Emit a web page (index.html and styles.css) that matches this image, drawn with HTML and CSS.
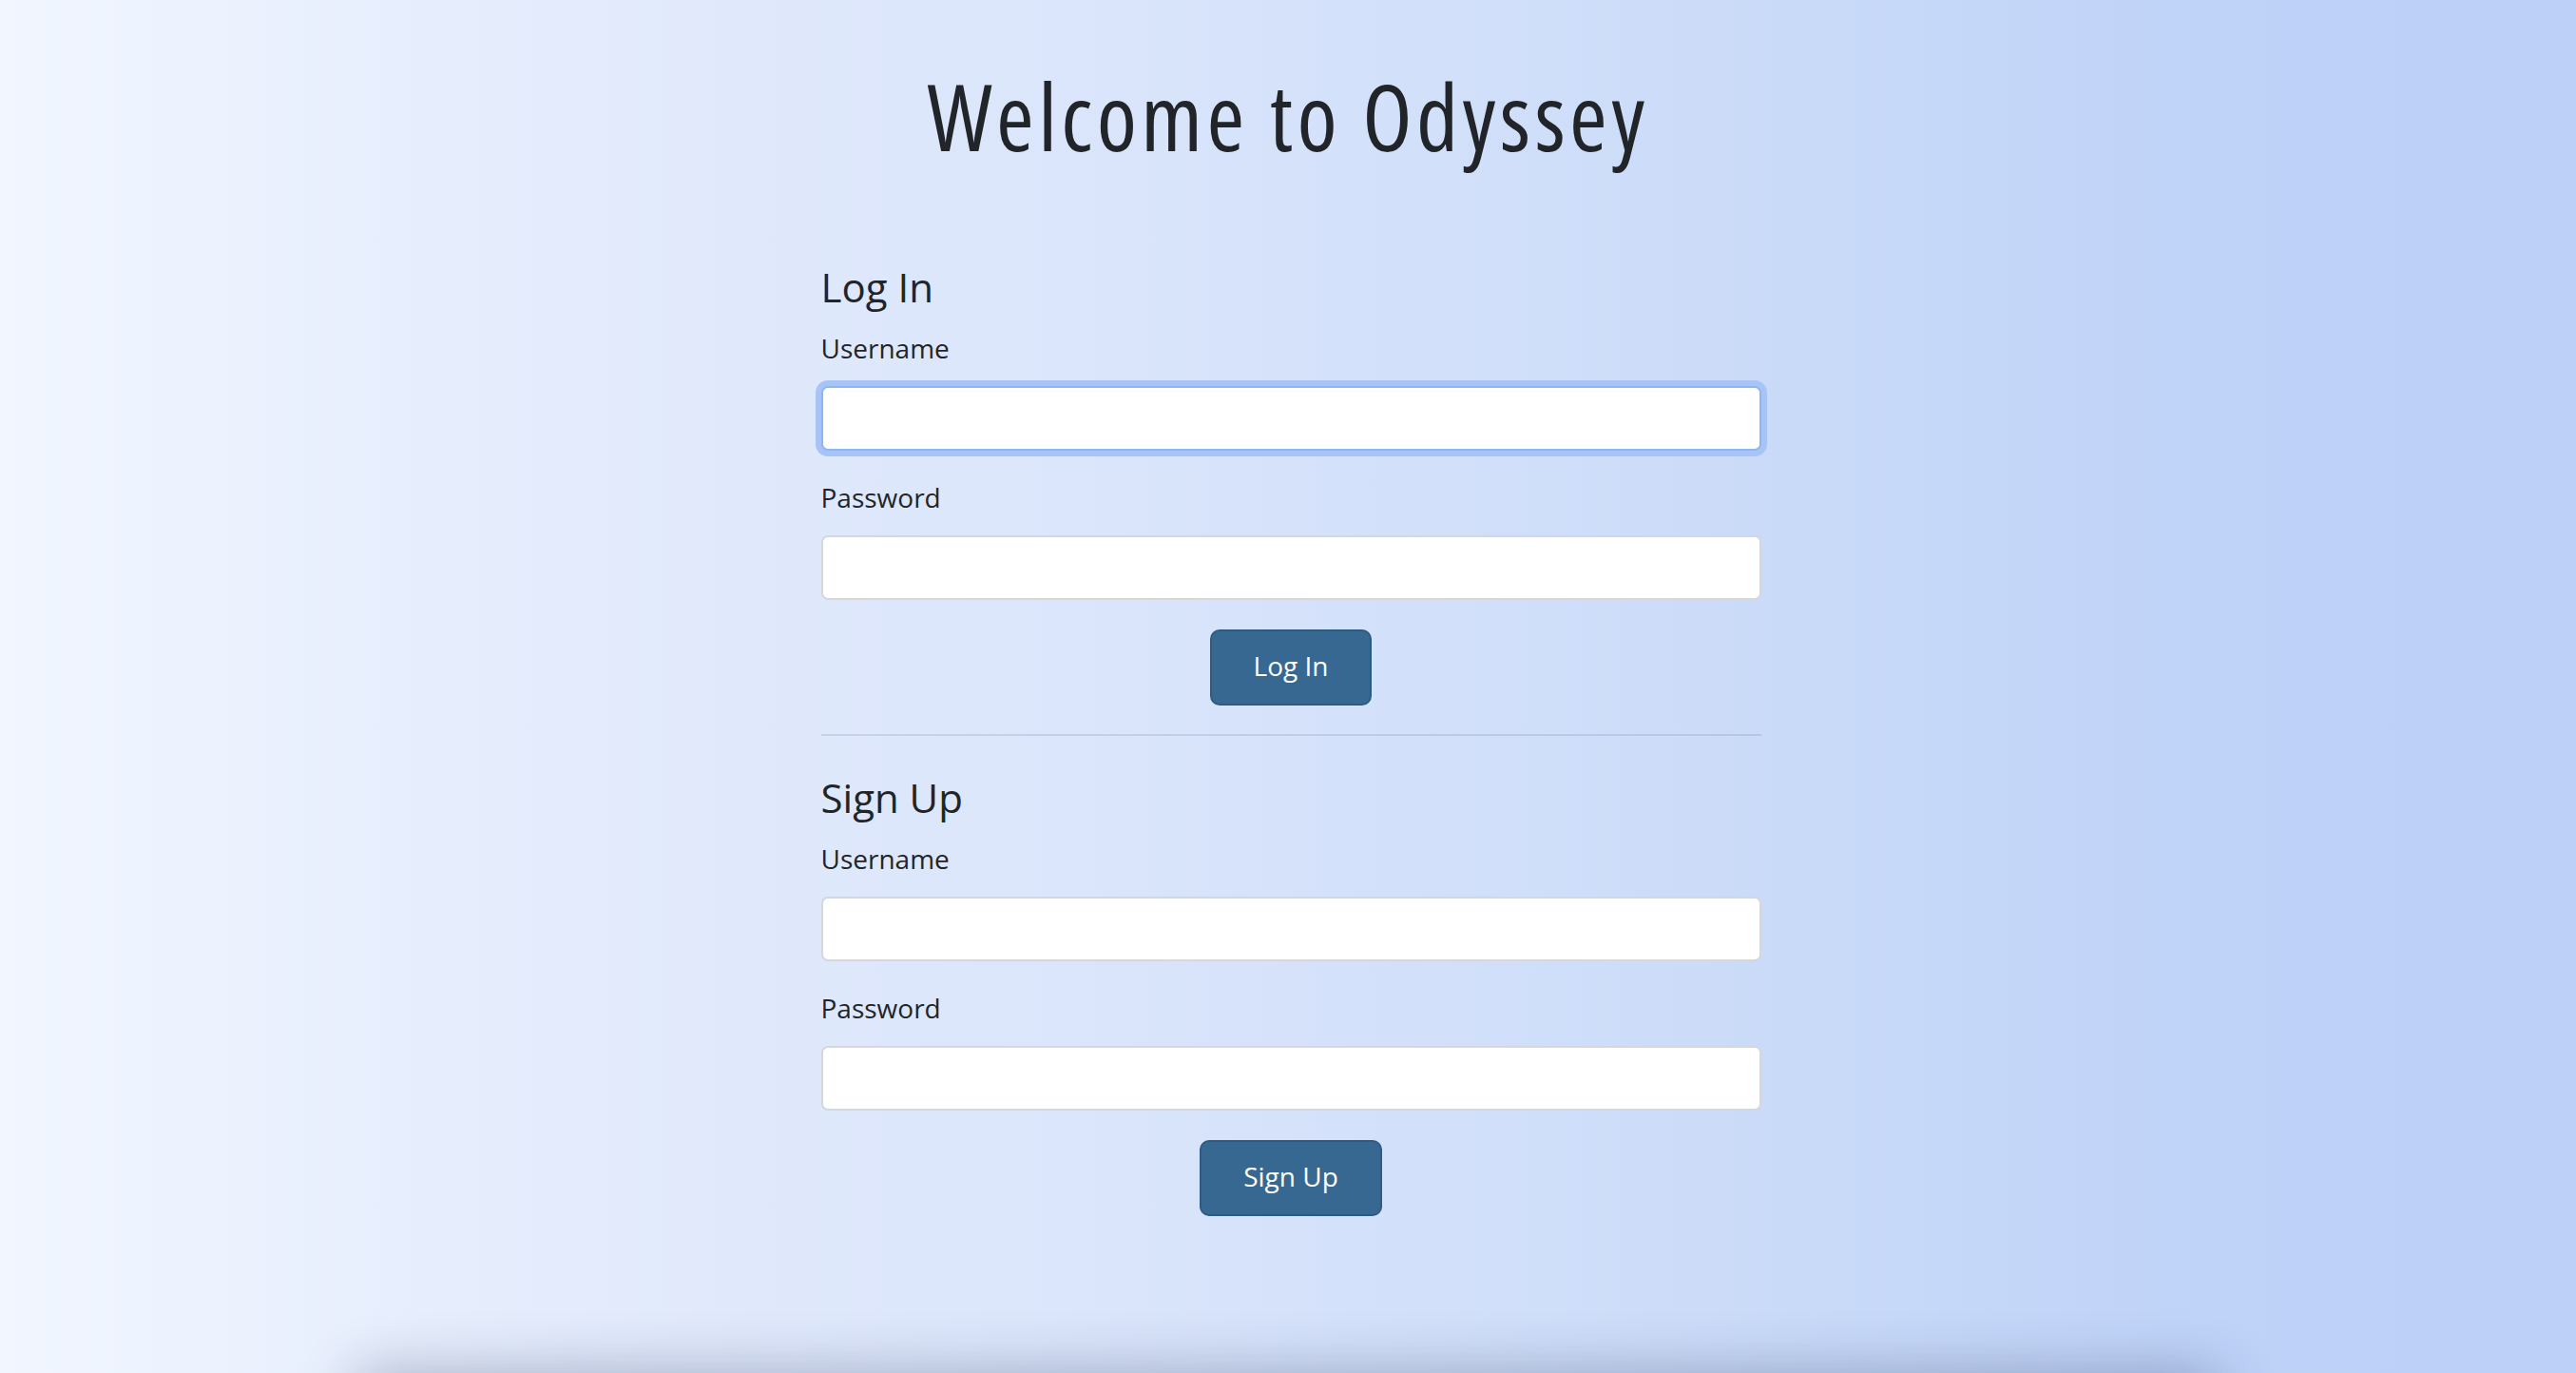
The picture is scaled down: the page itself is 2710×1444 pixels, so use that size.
FILE: index.html
```html
<!DOCTYPE html>
<html lang="en">
<head>
<meta charset="utf-8">
<title>Welcome to Odyssey</title>
<link rel="stylesheet" href="styles.css">
</head>
<body>
<main class="page">
  <h1 class="title">Welcome to Odyssey</h1>
  <div class="auth">
    <form class="auth-form">
      <h2 class="form-title">Log In</h2>
      <label class="field-label" for="login-user">Username</label>
      <input class="field-input is-focused" id="login-user" type="text">
      <label class="field-label" for="login-pass">Password</label>
      <input class="field-input" id="login-pass" type="password">
      <div class="actions"><button class="btn" type="button">Log In</button></div>
    </form>
    <hr class="divider">
    <form class="auth-form">
      <h2 class="form-title">Sign Up</h2>
      <label class="field-label" for="signup-user">Username</label>
      <input class="field-input" id="signup-user" type="text">
      <label class="field-label" for="signup-pass">Password</label>
      <input class="field-input" id="signup-pass" type="password">
      <div class="actions"><button class="btn" type="button">Sign Up</button></div>
    </form>
  </div>
  <div class="bottom-shadow"></div>
</main>
</body>
</html>
```

FILE: styles.css
```css
* { box-sizing: border-box; }

html, body {
  margin: 0;
  height: 100%;
}

body {
  font-family: "Open Sans", "Noto Sans", "DejaVu Sans", sans-serif;
  color: #212529;
  background: linear-gradient(90deg, #f1f6ff 0%, #e3ebfc 22%, #dae5fb 43%, #c9daf8 70%, #bed2f8 88%, #bcd0f8 100%);
  overflow: hidden;
}

.page {
  position: relative;
  min-height: 100vh;
  overflow: hidden;
  padding-top: 63px;
  display: flex;
  flex-direction: column;
  align-items: center;
}

.title {
  margin: 0;
  font-size: 96px;
  line-height: 118px;
  font-weight: 400;
  font-stretch: 75%;
  letter-spacing: 4.4px;
  text-align: center;
}

.auth {
  width: 989px;
  margin-top: 96px;
  margin-left: 6px;
  display: flex;
  flex-direction: column;
}

.auth-form {
  display: flex;
  flex-direction: column;
}

.form-title {
  margin: 0 0 18px;
  font-size: 42px;
  line-height: 50px;
  font-weight: 400;
}

.field-label {
  font-size: 28px;
  line-height: 42px;
  margin-bottom: 19px;
}

.field-input {
  height: 68px;
  margin-bottom: 28px;
  border: 2px solid #d3d8df;
  border-radius: 7px;
  background: #fff;
  font: inherit;
  font-size: 28px;
  padding: 0 20px;
  outline: none;
}

.field-input.is-focused {
  border-color: #8db6f5;
  box-shadow: 0 0 0 6px #a8c4f6;
}

.actions {
  display: flex;
  justify-content: center;
  margin-top: 3px;
}

.btn {
  height: 80px;
  padding: 0 44px 4px;
  border: 2px solid #2e5b81;
  border-radius: 10px;
  background: #376891;
  color: #fff;
  font-family: "Open Sans", "Noto Sans", sans-serif;
  font-size: 28px;
  cursor: pointer;
}

.divider {
  margin: 30px 0 40px;
  border: 0;
  border-top: 2px solid rgba(40, 60, 100, 0.12);
  height: 0;
}

.bottom-shadow {
  position: absolute;
  top: 100%;
  left: 50%;
  width: 1960px;
  height: 100px;
  transform: translateX(-50%);
  box-shadow: 0 0 60px rgba(30, 45, 80, 0.32);
}
```
